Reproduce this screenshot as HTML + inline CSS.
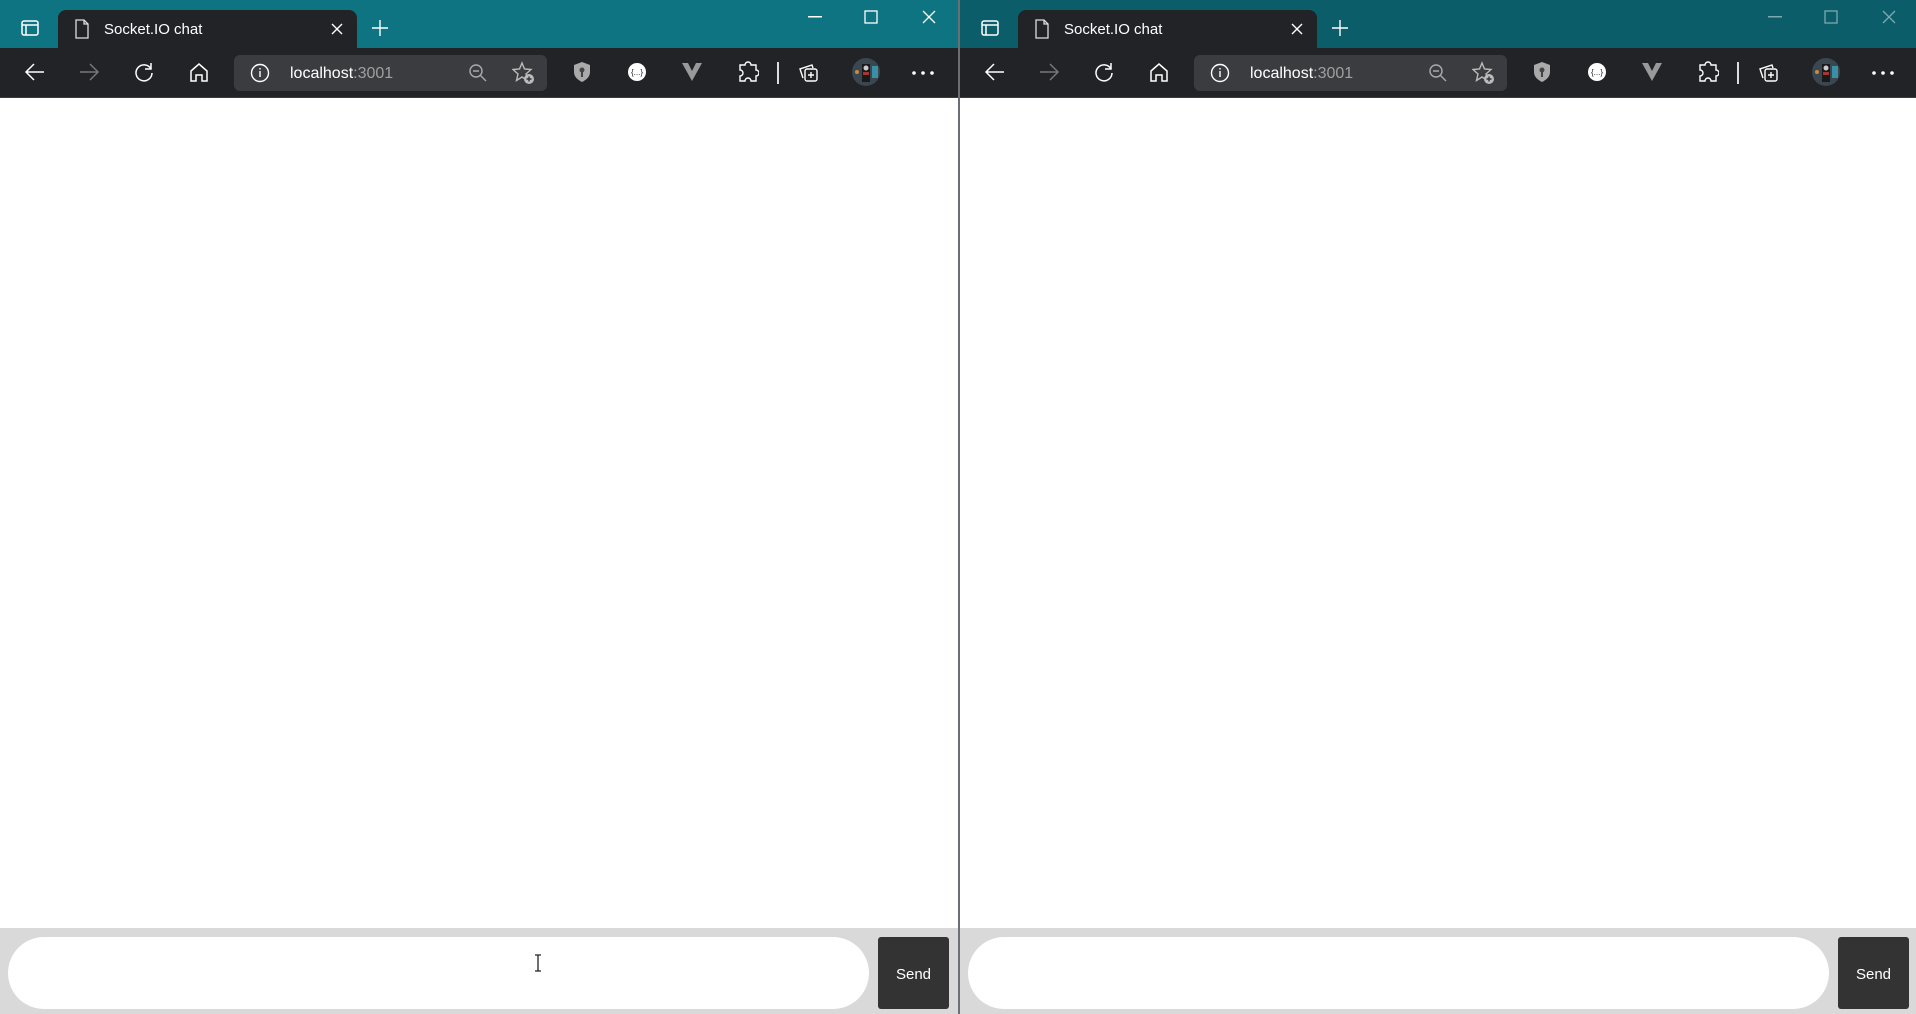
<!DOCTYPE html>
<html><head><meta charset="utf-8">
<style>
*{margin:0;padding:0;box-sizing:border-box}
body{width:1916px;height:1014px;overflow:hidden;background:#fff;font-family:"Liberation Sans",sans-serif;position:relative}
.pane{position:absolute;top:0;height:1014px;background:#fff;overflow:hidden}
.tabbar{position:absolute;left:0;top:0;right:0;height:48px}
.tab{position:absolute;left:58px;top:10px;width:299px;height:39px;background:#222327;border-radius:8px 8px 0 0}
.tab .t{position:absolute;left:46px;top:11px;color:#fff;font-size:15px}
.toolbar{position:absolute;left:0;top:48px;right:0;height:50px;background:#222327;border-bottom:1px solid #3a3b3e}
.addr{position:absolute;left:234px;top:7px;width:313px;height:36px;background:#3b3c40;border-radius:6px}
.addr .u{position:absolute;left:56px;top:10px;color:#fff;font-size:16px}
.addr .u span{color:#a0a0a0}
svg{position:absolute}
.form{position:absolute;left:0;top:928px;right:0;height:86px;background:#d9d9d9}
.inp{position:absolute;left:8px;top:9px;height:72px;background:#fff;border-radius:36px}
.send{position:absolute;top:9px;width:71px;height:72px;background:#333;border-radius:3px;color:#fff;font-size:15px;text-align:center;line-height:76px}
</style></head><body>

<div class="pane" style="left:0;width:958px">
 <div class="tabbar" style="background:#0e7481"></div>
 <svg style="left:20px;top:18px" width="20" height="20" viewBox="0 0 20 20" fill="none" stroke="#fff" stroke-width="1.5"><rect x="2" y="3" width="16" height="14" rx="2"/><line x1="2" y1="7" x2="18" y2="7"/><line x1="6" y1="7" x2="6" y2="17"/></svg>
 <div class="tab"><svg style="left:16px;top:9px" width="16" height="20" viewBox="0 0 16 20" fill="none" stroke="#ddd" stroke-width="1.3"><path d="M2 1h8l4 4v14H2z M10 1v4h4"/></svg><div class="t">Socket.IO chat</div>
 <svg style="left:273px;top:13px" width="12" height="12" viewBox="0 0 12 12" stroke="#fff" stroke-width="1.4"><path d="M1 1l10 10M11 1L1 11"/></svg></div>
 <svg style="left:372px;top:20px" width="16" height="16" viewBox="0 0 16 16" stroke="#fff" stroke-width="1.4"><path d="M8 0v16M0 8h16"/></svg>
 <svg style="left:808px;top:16px" width="14" height="2"><rect width="14" height="1.5" fill="#fff"/></svg>
 <svg style="left:864px;top:10px" width="14" height="14" viewBox="0 0 14 14" fill="none" stroke="#fff" stroke-width="1.3"><rect x="1" y="1" width="12" height="12"/></svg>
 <svg style="left:922px;top:10px" width="14" height="14" viewBox="0 0 14 14" stroke="#fff" stroke-width="1.3"><path d="M1 1l12 12M13 1L1 13"/></svg>
 <div class="toolbar">
  <svg style="left:24px;top:13px" width="22" height="22" viewBox="0 0 22 22" fill="none" stroke="#fff" stroke-width="1.5"><path d="M20 11H2M10 3l-8 8 8 8"/></svg>
  <svg style="left:78px;top:13px" width="22" height="22" viewBox="0 0 22 22" fill="none" stroke="#777" stroke-width="1.5"><path d="M2 11h18M12 3l8 8-8 8"/></svg>
  <svg style="left:133px;top:13px" width="22" height="22" viewBox="0 0 22 22" fill="none" stroke="#fff" stroke-width="1.5"><path d="M18 8A8 8 0 1 0 19 12M18 2v6h-6"/></svg>
  <svg style="left:188px;top:13px" width="22" height="22" viewBox="0 0 22 22" fill="none" stroke="#fff" stroke-width="1.5"><path d="M3 10l8-7 8 7v10h-5v-6h-6v6H3z"/></svg>
  <div class="addr">
   <svg style="left:16px;top:8px" width="20" height="20" viewBox="0 0 20 20" fill="none" stroke="#fff" stroke-width="1.4"><circle cx="10" cy="10" r="8.5"/><path d="M10 8v6M10 5v1.5"/></svg>
   <div class="u">localhost<span>:3001</span></div>
   <svg style="left:234px;top:8px" width="20" height="20" viewBox="0 0 20 20" fill="none" stroke="#aaa" stroke-width="1.4"><circle cx="8" cy="8" r="6"/><path d="M5 8h6M12.5 12.5L18 18"/></svg>
   <svg style="left:278px;top:6px" width="24" height="24" viewBox="0 0 24 24" fill="none" stroke="#bbb" stroke-width="1.4"><path d="M10 2l2.5 6 6.5.5-5 4.5 1.5 6.5L10 16l-5.5 3.5L6 13 1 8.5 7.5 8z"/><circle cx="17" cy="18" r="5" fill="#bbb" stroke="none"/><path d="M17 15.5v5M14.5 18h5" stroke="#333"/></svg>
  </div>
  <svg style="left:572px;top:13px" width="20" height="22" viewBox="0 0 20 22"><path d="M10 1l8 3v7c0 5-4 8-8 10C6 19 2 16 2 11V4z" fill="#aaa"/><circle cx="10" cy="9" r="2.5" fill="#444"/><rect x="9" y="10" width="2" height="6" fill="#444"/></svg>
  <svg style="left:627px;top:14px" width="20" height="20" viewBox="0 0 20 20"><circle cx="10" cy="10" r="9" fill="#fff"/><text x="10" y="13" font-size="8" text-anchor="middle" fill="#222" font-family="Liberation Sans">{...}</text></svg>
  <svg style="left:682px;top:15px" width="20" height="18" viewBox="0 0 20 18"><path d="M0 0h6l4 8 4-8h6L10 18z" fill="#999"/></svg>
  <svg style="left:737px;top:13px" width="22" height="22" viewBox="0 0 22 22" fill="none" stroke="#fff" stroke-width="1.4"><path d="M8 4a3 3 0 0 1 6 0h5v5a3 3 0 0 1 0 6v5h-5a3 3 0 0 0-6 0H3v-5a3 3 0 0 0 0-6V4z"/></svg>
  <div style="position:absolute;left:777px;top:14px;width:2px;height:22px;background:#ddd"></div>
  <svg style="left:797px;top:12px" width="24" height="24" viewBox="0 0 24 24" fill="none" stroke="#fff" stroke-width="1.4"><path d="M6 18l-3-9 12-4 1 3"/><rect x="8" y="9" width="12" height="12" rx="2"/><path d="M14 12v6M11 15h6"/></svg>
  <svg style="left:852px;top:10px" width="28" height="28"><circle cx="14" cy="14" r="14" fill="#3a4650"/><rect x="10" y="6" width="8" height="18" fill="#1a1a1a"/><rect x="11" y="14" width="6" height="3" fill="#a33"/><circle cx="14" cy="10" r="2.5" fill="#ccc"/><rect x="20" y="8" width="6" height="12" fill="#3a8fa4"/><circle cx="5" cy="14" r="2" fill="#c84"/></svg>
  <svg style="left:912px;top:23px" width="22" height="4"><circle cx="2" cy="2" r="1.8" fill="#fff"/><circle cx="11" cy="2" r="1.8" fill="#fff"/><circle cx="20" cy="2" r="1.8" fill="#fff"/></svg>
 </div>
 <div class="form"><div class="inp" style="width:861px"></div><div class="send" style="left:878px">Send</div></div>
 <svg style="left:533px;top:954px" width="10" height="18" viewBox="0 0 10 18" fill="none" stroke="#222" stroke-width="1.3"><path d="M2 1h6M5 1v16M2 17h6"/></svg>
</div>

<div style="position:absolute;left:958px;top:0;width:2px;height:1014px;background:#6b6f73"></div>

<div class="pane" style="left:960px;width:956px">
 <div class="tabbar" style="background:#0b5d69"></div>
 <svg style="left:20px;top:18px" width="20" height="20" viewBox="0 0 20 20" fill="none" stroke="#fff" stroke-width="1.5"><rect x="2" y="3" width="16" height="14" rx="2"/><line x1="2" y1="7" x2="18" y2="7"/><line x1="6" y1="7" x2="6" y2="17"/></svg>
 <div class="tab"><svg style="left:16px;top:9px" width="16" height="20" viewBox="0 0 16 20" fill="none" stroke="#ddd" stroke-width="1.3"><path d="M2 1h8l4 4v14H2z M10 1v4h4"/></svg><div class="t">Socket.IO chat</div>
 <svg style="left:273px;top:13px" width="12" height="12" viewBox="0 0 12 12" stroke="#fff" stroke-width="1.4"><path d="M1 1l10 10M11 1L1 11"/></svg></div>
 <svg style="left:372px;top:20px" width="16" height="16" viewBox="0 0 16 16" stroke="#fff" stroke-width="1.4"><path d="M8 0v16M0 8h16"/></svg>
 <svg style="left:808px;top:16px" width="14" height="2"><rect width="14" height="1.5" fill="#7fa9b0"/></svg>
 <svg style="left:864px;top:10px" width="14" height="14" viewBox="0 0 14 14" fill="none" stroke="#7fa9b0" stroke-width="1.3"><rect x="1" y="1" width="12" height="12"/></svg>
 <svg style="left:922px;top:10px" width="14" height="14" viewBox="0 0 14 14" stroke="#7fa9b0" stroke-width="1.3"><path d="M1 1l12 12M13 1L1 13"/></svg>
 <div class="toolbar">
  <svg style="left:24px;top:13px" width="22" height="22" viewBox="0 0 22 22" fill="none" stroke="#fff" stroke-width="1.5"><path d="M20 11H2M10 3l-8 8 8 8"/></svg>
  <svg style="left:78px;top:13px" width="22" height="22" viewBox="0 0 22 22" fill="none" stroke="#777" stroke-width="1.5"><path d="M2 11h18M12 3l8 8-8 8"/></svg>
  <svg style="left:133px;top:13px" width="22" height="22" viewBox="0 0 22 22" fill="none" stroke="#fff" stroke-width="1.5"><path d="M18 8A8 8 0 1 0 19 12M18 2v6h-6"/></svg>
  <svg style="left:188px;top:13px" width="22" height="22" viewBox="0 0 22 22" fill="none" stroke="#fff" stroke-width="1.5"><path d="M3 10l8-7 8 7v10h-5v-6h-6v6H3z"/></svg>
  <div class="addr">
   <svg style="left:16px;top:8px" width="20" height="20" viewBox="0 0 20 20" fill="none" stroke="#fff" stroke-width="1.4"><circle cx="10" cy="10" r="8.5"/><path d="M10 8v6M10 5v1.5"/></svg>
   <div class="u">localhost<span>:3001</span></div>
   <svg style="left:234px;top:8px" width="20" height="20" viewBox="0 0 20 20" fill="none" stroke="#aaa" stroke-width="1.4"><circle cx="8" cy="8" r="6"/><path d="M5 8h6M12.5 12.5L18 18"/></svg>
   <svg style="left:278px;top:6px" width="24" height="24" viewBox="0 0 24 24" fill="none" stroke="#bbb" stroke-width="1.4"><path d="M10 2l2.5 6 6.5.5-5 4.5 1.5 6.5L10 16l-5.5 3.5L6 13 1 8.5 7.5 8z"/><circle cx="17" cy="18" r="5" fill="#bbb" stroke="none"/><path d="M17 15.5v5M14.5 18h5" stroke="#333"/></svg>
  </div>
  <svg style="left:572px;top:13px" width="20" height="22" viewBox="0 0 20 22"><path d="M10 1l8 3v7c0 5-4 8-8 10C6 19 2 16 2 11V4z" fill="#aaa"/><circle cx="10" cy="9" r="2.5" fill="#444"/><rect x="9" y="10" width="2" height="6" fill="#444"/></svg>
  <svg style="left:627px;top:14px" width="20" height="20" viewBox="0 0 20 20"><circle cx="10" cy="10" r="9" fill="#fff"/><text x="10" y="13" font-size="8" text-anchor="middle" fill="#222" font-family="Liberation Sans">{...}</text></svg>
  <svg style="left:682px;top:15px" width="20" height="18" viewBox="0 0 20 18"><path d="M0 0h6l4 8 4-8h6L10 18z" fill="#999"/></svg>
  <svg style="left:737px;top:13px" width="22" height="22" viewBox="0 0 22 22" fill="none" stroke="#fff" stroke-width="1.4"><path d="M8 4a3 3 0 0 1 6 0h5v5a3 3 0 0 1 0 6v5h-5a3 3 0 0 0-6 0H3v-5a3 3 0 0 0 0-6V4z"/></svg>
  <div style="position:absolute;left:777px;top:14px;width:2px;height:22px;background:#ddd"></div>
  <svg style="left:797px;top:12px" width="24" height="24" viewBox="0 0 24 24" fill="none" stroke="#fff" stroke-width="1.4"><path d="M6 18l-3-9 12-4 1 3"/><rect x="8" y="9" width="12" height="12" rx="2"/><path d="M14 12v6M11 15h6"/></svg>
  <svg style="left:852px;top:10px" width="28" height="28"><circle cx="14" cy="14" r="14" fill="#3a4650"/><rect x="10" y="6" width="8" height="18" fill="#1a1a1a"/><rect x="11" y="14" width="6" height="3" fill="#a33"/><circle cx="14" cy="10" r="2.5" fill="#ccc"/><rect x="20" y="8" width="6" height="12" fill="#3a8fa4"/><circle cx="5" cy="14" r="2" fill="#c84"/></svg>
  <svg style="left:912px;top:23px" width="22" height="4"><circle cx="2" cy="2" r="1.8" fill="#fff"/><circle cx="11" cy="2" r="1.8" fill="#fff"/><circle cx="20" cy="2" r="1.8" fill="#fff"/></svg>
 </div>
 <div class="form"><div class="inp" style="width:861px"></div><div class="send" style="left:878px">Send</div></div>
</div>
</body></html>
